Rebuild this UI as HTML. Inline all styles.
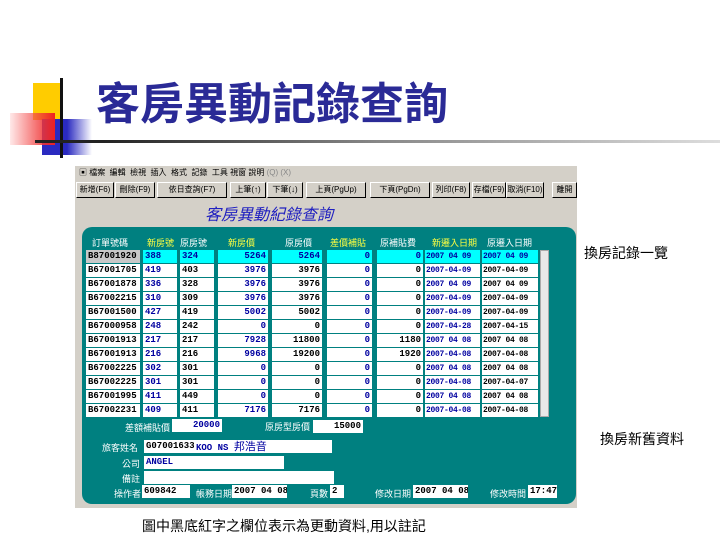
<!DOCTYPE html>
<html><head><meta charset="utf-8"><style>
*{margin:0;padding:0;box-sizing:border-box}
body{width:720px;height:540px;background:#fff;position:relative;overflow:hidden;font-family:"Liberation Sans","Noto Sans CJK TC",sans-serif}
.a{position:absolute}
.c{position:absolute;height:13px;background:#fff;font:bold 9px/13px "Liberation Mono",monospace;color:#000;padding:0 2px;white-space:nowrap;overflow:hidden}
.d{font-size:8px;letter-spacing:-0.3px;padding:0 1px}
.b{color:#0000a0}.r{text-align:right}.cy{background:#00ffff}
.h{position:absolute;top:236px;font-size:9px;color:#fff}
.y{color:#ffff40}
.l{position:absolute;font-size:9px;color:#fff;white-space:nowrap}
.btn{position:absolute;top:182px;height:16px;background:#d4d0c8;border:1px solid #000;border-top-color:#fff;border-left-color:#fff;font-size:8px;line-height:14px;text-align:center;color:#000;white-space:nowrap;overflow:hidden}
</style></head><body>
<div class="a" style="left:33px;top:83px;width:30px;height:37px;background:#ffcc00"></div>
<div class="a" style="left:42px;top:119px;width:50px;height:36px;background:linear-gradient(90deg,#2a2ac0 50%,rgba(60,60,200,0))"></div>
<div class="a" style="left:10px;top:113px;width:45px;height:32px;background:linear-gradient(90deg,rgba(255,200,200,0.4),#ee2020)"></div>
<div class="a" style="left:60px;top:78px;width:3px;height:80px;background:#111"></div>
<div class="a" style="left:35px;top:140px;width:685px;height:3px;background:linear-gradient(90deg,#222 10%,#888 50%,#ddd)"></div>
<div class="a" style="left:96px;top:80px;font-size:44px;font-weight:bold;color:#2a2a96;line-height:50px;white-space:nowrap">客房異動記錄查詢</div>

<div class="a" style="left:75px;top:166px;width:502px;height:342px;background:#d4d0c8"></div>
<div class="a" style="left:75px;top:166px;width:502px;height:13px;font-size:8px;line-height:13px;color:#000;white-space:nowrap;padding-left:4px">▣ 檔案&nbsp; 編輯&nbsp; 檢視&nbsp; 插入&nbsp; 格式&nbsp; 記錄&nbsp; 工具 視窗 說明 <span style="color:#888">(Q) (X)</span></div>
<div class="btn" style="left:76px;width:38px">新增(F6)</div>
<div class="btn" style="left:115px;width:40px">刪除(F9)</div>
<div class="btn" style="left:157px;width:70px">依日查詢(F7)</div>
<div class="btn" style="left:230px;width:36px">上筆(↑)</div>
<div class="btn" style="left:267px;width:36px">下筆(↓)</div>
<div class="btn" style="left:306px;width:60px">上頁(PgUp)</div>
<div class="btn" style="left:370px;width:60px">下頁(PgDn)</div>
<div class="btn" style="left:432px;width:38px">列印(F8)</div>
<div class="btn" style="left:472px;width:34px">存檔(F9)</div>
<div class="btn" style="left:506px;width:38px">取消(F10)</div>
<div class="btn" style="left:552px;width:25px">離開</div>
<div class="a" style="left:205px;top:201px;font-size:16px;font-style:italic;color:#2020c0">客房異動紀錄查詢</div>
<div class="a" style="left:82px;top:227px;width:494px;height:277px;background:#008080;border-radius:10px"></div>

<div class="h" style="left:92px">訂單號碼</div>
<div class="h y" style="left:147px">新房號</div>
<div class="h" style="left:180px">原房號</div>
<div class="h y" style="left:228px">新房價</div>
<div class="h" style="left:285px">原房價</div>
<div class="h y" style="left:330px">差價補貼</div>
<div class="h" style="left:380px">原補貼費</div>
<div class="h y" style="left:432px">新遷入日期</div>
<div class="h" style="left:487px">原遷入日期</div>

<div class="a" style="left:540px;top:250px;width:9px;height:167px;background:#e8e8e8;border:1px solid #aaa"></div>

<div class="c cy" style="left:86px;top:250px;width:54px;background:#c8c8c8">B87001920</div><div class="c b cy" style="left:143px;top:250px;width:34px">388</div><div class="c b cy" style="left:180px;top:250px;width:34px">324</div><div class="c b cy r" style="left:218px;top:250px;width:50px">5264</div><div class="c b cy r" style="left:272px;top:250px;width:50px">5264</div><div class="c b cy r" style="left:327px;top:250px;width:45px">0</div><div class="c b cy r" style="left:377px;top:250px;width:46px">0</div><div class="c d b cy" style="left:425px;top:250px;width:55px">2007 04 09</div><div class="c d b cy" style="left:482px;top:250px;width:56px">2007 04 09</div>

<div class="c" style="left:86px;top:264px;width:54px">B67001705</div><div class="c b" style="left:143px;top:264px;width:34px">419</div><div class="c" style="left:180px;top:264px;width:34px">403</div><div class="c b r" style="left:218px;top:264px;width:50px">3976</div><div class="c r" style="left:272px;top:264px;width:50px">3976</div><div class="c b r" style="left:327px;top:264px;width:45px">0</div><div class="c r" style="left:377px;top:264px;width:46px">0</div><div class="c d b" style="left:425px;top:264px;width:55px">2007-04-09</div><div class="c d" style="left:482px;top:264px;width:56px">2007-04-09</div>

<div class="c" style="left:86px;top:278px;width:54px">B67001878</div><div class="c b" style="left:143px;top:278px;width:34px">336</div><div class="c" style="left:180px;top:278px;width:34px">328</div><div class="c b r" style="left:218px;top:278px;width:50px">3976</div><div class="c r" style="left:272px;top:278px;width:50px">3976</div><div class="c b r" style="left:327px;top:278px;width:45px">0</div><div class="c r" style="left:377px;top:278px;width:46px">0</div><div class="c d b" style="left:425px;top:278px;width:55px">2007 04 09</div><div class="c d" style="left:482px;top:278px;width:56px">2007 04 09</div>

<div class="c" style="left:86px;top:292px;width:54px">B67002215</div><div class="c b" style="left:143px;top:292px;width:34px">310</div><div class="c" style="left:180px;top:292px;width:34px">309</div><div class="c b r" style="left:218px;top:292px;width:50px">3976</div><div class="c r" style="left:272px;top:292px;width:50px">3976</div><div class="c b r" style="left:327px;top:292px;width:45px">0</div><div class="c r" style="left:377px;top:292px;width:46px">0</div><div class="c d b" style="left:425px;top:292px;width:55px">2007-04-09</div><div class="c d" style="left:482px;top:292px;width:56px">2007-04-09</div>

<div class="c" style="left:86px;top:306px;width:54px">B67001500</div><div class="c b" style="left:143px;top:306px;width:34px">427</div><div class="c" style="left:180px;top:306px;width:34px">419</div><div class="c b r" style="left:218px;top:306px;width:50px">5002</div><div class="c r" style="left:272px;top:306px;width:50px">5002</div><div class="c b r" style="left:327px;top:306px;width:45px">0</div><div class="c r" style="left:377px;top:306px;width:46px">0</div><div class="c d b" style="left:425px;top:306px;width:55px">2007-04-09</div><div class="c d" style="left:482px;top:306px;width:56px">2007-04-09</div>

<div class="c" style="left:86px;top:320px;width:54px">B67000958</div><div class="c b" style="left:143px;top:320px;width:34px">248</div><div class="c" style="left:180px;top:320px;width:34px">242</div><div class="c b r" style="left:218px;top:320px;width:50px">0</div><div class="c r" style="left:272px;top:320px;width:50px">0</div><div class="c b r" style="left:327px;top:320px;width:45px">0</div><div class="c r" style="left:377px;top:320px;width:46px">0</div><div class="c d b" style="left:425px;top:320px;width:55px">2007-04-28</div><div class="c d" style="left:482px;top:320px;width:56px">2007-04-15</div>

<div class="c" style="left:86px;top:334px;width:54px">B67001913</div><div class="c b" style="left:143px;top:334px;width:34px">217</div><div class="c" style="left:180px;top:334px;width:34px">217</div><div class="c b r" style="left:218px;top:334px;width:50px">7928</div><div class="c r" style="left:272px;top:334px;width:50px">11800</div><div class="c b r" style="left:327px;top:334px;width:45px">0</div><div class="c r" style="left:377px;top:334px;width:46px">1180</div><div class="c d b" style="left:425px;top:334px;width:55px">2007 04 08</div><div class="c d" style="left:482px;top:334px;width:56px">2007 04 08</div>

<div class="c" style="left:86px;top:348px;width:54px">B67001913</div><div class="c b" style="left:143px;top:348px;width:34px">216</div><div class="c" style="left:180px;top:348px;width:34px">216</div><div class="c b r" style="left:218px;top:348px;width:50px">9968</div><div class="c r" style="left:272px;top:348px;width:50px">19200</div><div class="c b r" style="left:327px;top:348px;width:45px">0</div><div class="c r" style="left:377px;top:348px;width:46px">1920</div><div class="c d b" style="left:425px;top:348px;width:55px">2007-04-08</div><div class="c d" style="left:482px;top:348px;width:56px">2007-04-08</div>

<div class="c" style="left:86px;top:362px;width:54px">B67002225</div><div class="c b" style="left:143px;top:362px;width:34px">302</div><div class="c" style="left:180px;top:362px;width:34px">301</div><div class="c b r" style="left:218px;top:362px;width:50px">0</div><div class="c r" style="left:272px;top:362px;width:50px">0</div><div class="c b r" style="left:327px;top:362px;width:45px">0</div><div class="c r" style="left:377px;top:362px;width:46px">0</div><div class="c d b" style="left:425px;top:362px;width:55px">2007 04 08</div><div class="c d" style="left:482px;top:362px;width:56px">2007 04 08</div>

<div class="c" style="left:86px;top:376px;width:54px">B67002225</div><div class="c b" style="left:143px;top:376px;width:34px">301</div><div class="c" style="left:180px;top:376px;width:34px">301</div><div class="c b r" style="left:218px;top:376px;width:50px">0</div><div class="c r" style="left:272px;top:376px;width:50px">0</div><div class="c b r" style="left:327px;top:376px;width:45px">0</div><div class="c r" style="left:377px;top:376px;width:46px">0</div><div class="c d b" style="left:425px;top:376px;width:55px">2007-04-08</div><div class="c d" style="left:482px;top:376px;width:56px">2007-04-07</div>

<div class="c" style="left:86px;top:390px;width:54px">B67001995</div><div class="c b" style="left:143px;top:390px;width:34px">411</div><div class="c" style="left:180px;top:390px;width:34px">449</div><div class="c b r" style="left:218px;top:390px;width:50px">0</div><div class="c r" style="left:272px;top:390px;width:50px">0</div><div class="c b r" style="left:327px;top:390px;width:45px">0</div><div class="c r" style="left:377px;top:390px;width:46px">0</div><div class="c d b" style="left:425px;top:390px;width:55px">2007 04 08</div><div class="c d" style="left:482px;top:390px;width:56px">2007 04 08</div>

<div class="c" style="left:86px;top:404px;width:54px">B67002231</div><div class="c b" style="left:143px;top:404px;width:34px">409</div><div class="c" style="left:180px;top:404px;width:34px">411</div><div class="c b r" style="left:218px;top:404px;width:50px">7176</div><div class="c r" style="left:272px;top:404px;width:50px">7176</div><div class="c b r" style="left:327px;top:404px;width:45px">0</div><div class="c r" style="left:377px;top:404px;width:46px">0</div><div class="c d b" style="left:425px;top:404px;width:55px">2007-04-08</div><div class="c d" style="left:482px;top:404px;width:56px">2007-04-08</div>

<div class="l y" style="left:125px;top:421px">差額補貼價</div>
<div class="c b r" style="left:172px;top:419px;width:50px">20000</div>
<div class="l" style="left:265px;top:420px">原房型房價</div>
<div class="c r" style="left:313px;top:420px;width:50px">15000</div>

<div class="l y" style="left:102px;top:441px">旅客姓名</div>
<div class="c" style="left:144px;top:440px;width:50px">G07001633</div>
<div class="c b" style="left:194px;top:440px;width:138px;font-size:9px">KOO NS <span style="font-family:'Noto Sans CJK TC',sans-serif;font-weight:normal;font-size:11px">邦浩音</span></div>
<div class="l y" style="left:122px;top:457px">公司</div>
<div class="c b" style="left:144px;top:456px;width:140px">ANGEL</div>
<div class="l" style="left:122px;top:472px">備註</div>
<div class="c" style="left:144px;top:471px;width:190px"></div>
<div class="l" style="left:114px;top:487px">操作者</div>
<div class="c" style="left:142px;top:485px;width:48px">609842</div>
<div class="l" style="left:196px;top:487px">帳務日期</div>
<div class="c" style="left:232px;top:485px;width:55px">2007 04 08</div>
<div class="l" style="left:310px;top:487px">頁數</div>
<div class="c" style="left:330px;top:485px;width:14px">2</div>
<div class="l" style="left:375px;top:487px">修改日期</div>
<div class="c" style="left:413px;top:485px;width:55px">2007 04 08</div>
<div class="l" style="left:490px;top:487px">修改時間</div>
<div class="c" style="left:528px;top:485px;width:29px">17:47</div>

<div class="a" style="left:584px;top:243px;font-size:14px;color:#000">換房記錄一覽</div>
<div class="a" style="left:600px;top:429px;font-size:14px;color:#000">換房新舊資料</div>
<div class="a" style="left:142px;top:516px;font-size:14px;color:#000;white-space:nowrap">圖中黑底紅字之欄位表示為更動資料,用以註記</div>
</body></html>
